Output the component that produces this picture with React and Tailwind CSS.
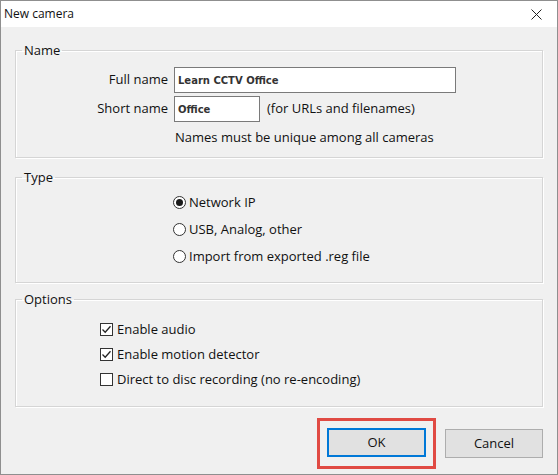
import { useState } from "react";

const font = { fontFamily: '"Open Sans", "Noto Sans", sans-serif' };

const Group = ({ title, className, bodyClass, children }) => (
  <fieldset
    className={
      "border border-[#d5d5d5] shadow-[inset_1px_1px_0_#ffffff,1px_1px_0_#ffffff] " +
      className
    }
  >
    <legend className="ml-[6px] px-[2px] text-[13px] leading-[16px] text-[#111]">
      {title}
    </legend>
    <div className={bodyClass}>{children}</div>
  </fieldset>
);

const Radio = ({ checked, label, onClick }) => (
  <div
    className="flex h-[27px] items-center gap-[3px] cursor-default"
    onClick={onClick}
  >
    <span className="flex h-[13px] w-[13px] items-center justify-center rounded-full border border-[#333] bg-white">
      {checked && <span className="h-[7px] w-[7px] rounded-full bg-[#1a1a1a]" />}
    </span>
    <span className="text-[13px] text-[#111]">{label}</span>
  </div>
);

const Check = ({ checked, label, onClick }) => (
  <div
    className="flex h-[25px] items-center gap-[4px] cursor-default"
    onClick={onClick}
  >
    <span className="flex h-[13px] w-[13px] items-center justify-center border border-[#333] bg-white">
      {checked && (
        <svg width="11" height="11" viewBox="0 0 11 11">
          <path d="M1.5 5.5 L4.2 8.2 L9.5 2.2" fill="none" stroke="#222" strokeWidth="1.3" />
        </svg>
      )}
    </span>
    <span className="text-[13px] text-[#111]">{label}</span>
  </div>
);

const App = () => {
  const [type, setType] = useState("ip");
  const [opts, setOpts] = useState({ audio: true, motion: true, direct: false });

  const toggle = (k) => setOpts({ ...opts, [k]: !opts[k] });

  return (
    <div
      className="h-[475px] w-[558px] border border-[#8f8f8f] bg-[#f0f0f0] text-[#111]"
      style={font}
    >
      {/* title bar */}
      <div className="flex h-[26px] items-center justify-between bg-white pl-[3px] pr-[15px]">
        <span className="text-[12px]">New camera</span>
        <svg width="11" height="11" viewBox="0 0 11 11">
          <path d="M0.5 0.5 L10.5 10.5 M10.5 0.5 L0.5 10.5" stroke="#222" strokeWidth="1" />
        </svg>
      </div>

      <div className="px-[14px]">
        <Group title="Name" className="mt-[15px]" bodyClass="pb-[10px]">
          <div className="grid grid-cols-[158px_1fr] items-center gap-y-[3px] pt-[9px]">
            <span className="pr-[6px] text-right text-[13px]">Full name</span>
            <input
              defaultValue="Learn CCTV Office"
              className="h-[26px] w-[282px] border border-[#7a7a7a] bg-white pl-[3px] text-[10px] font-bold text-[#333] outline-none"
              style={{ fontFamily: '"DejaVu Sans", sans-serif' }}
            />
            <span className="pr-[6px] text-right text-[13px]">Short name</span>
            <div className="flex items-center gap-[7px]">
              <input
                defaultValue="Office"
                className="h-[26px] w-[86px] border border-[#7a7a7a] bg-white pl-[3px] text-[10px] font-bold text-[#333] outline-none"
                style={{ fontFamily: '"DejaVu Sans", sans-serif' }}
              />
              <span className="text-[13px]">(for URLs and filenames)</span>
            </div>
            <span />
            <span className="flex h-[22px] items-end pl-[1px] text-[13px]">
              Names must be unique among all cameras
            </span>
          </div>
        </Group>

        <Group title="Type" className="mt-[11px]" bodyClass="pb-[12px] pl-[157px] pt-[4px]">
          <Radio checked={type === "ip"} label="Network IP" onClick={() => setType("ip")} />
          <Radio checked={type === "usb"} label="USB, Analog, other" onClick={() => setType("usb")} />
          <Radio
            checked={type === "reg"}
            label="Import from exported .reg file"
            onClick={() => setType("reg")}
          />
        </Group>

        <Group title="Options" className="mt-[8px]" bodyClass="pb-[14px] pl-[84px] pt-[10px]">
          <Check checked={opts.audio} label="Enable audio" onClick={() => toggle("audio")} />
          <Check checked={opts.motion} label="Enable motion detector" onClick={() => toggle("motion")} />
          <Check
            checked={opts.direct}
            label="Direct to disc recording (no re-encoding)"
            onClick={() => toggle("direct")}
          />
        </Group>

        <div className="mt-[11px] flex items-center justify-end gap-[9px]">
          <div className="border-[3px] border-[#e04a43] px-[7px] pb-[9px] pt-[7px]">
            <button className="h-[29px] w-[99px] border-2 border-[#0078d7] bg-[#e1e1e1] text-[13px]">
              OK
            </button>
          </div>
          <button className="h-[29px] w-[98px] border border-[#adadad] bg-[#e1e1e1] text-[13px]">
            Cancel
          </button>
        </div>
      </div>
    </div>
  );
};

export default App;
